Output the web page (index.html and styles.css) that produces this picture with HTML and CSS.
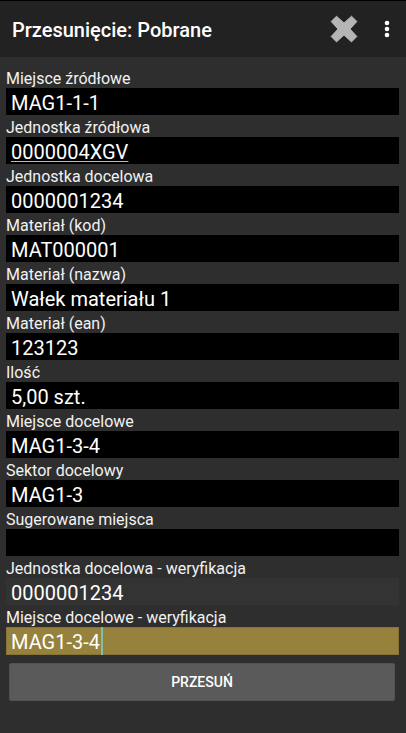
FILE: index.html
```html
<!DOCTYPE html>
<html lang="pl">
<head>
<meta charset="utf-8">
<meta name="viewport" content="width=device-width, initial-scale=1">
<title>Przesunięcie: Pobrane</title>
<link rel="stylesheet" href="styles.css">
</head>
<body>
<header class="bar">
  <h1 class="title">Przesunięcie: Pobrane</h1>
  <button class="icon-button close" type="button" aria-label="Zamknij">
    <svg width="28" height="28" viewBox="0 0 28 28"><path d="M6.500 1.200 14 8 21.500 1.200 26.900 6.500 20 14 26.900 21.500 21.500 26.900 14 20 6.500 26.900 1.200 21.500 8 14 1.200 6.500Z" fill="#b5b5b5" stroke="#b5b5b5" stroke-width="1" stroke-linejoin="round"/></svg>
  </button>
  <button class="icon-button more" type="button" aria-label="Więcej opcji">
    <svg width="6" height="18" viewBox="0 0 6 18"><g fill="#fff"><circle cx="3" cy="3" r="2.300"/><circle cx="3" cy="9" r="2.300"/><circle cx="3" cy="15" r="2.300"/></g></svg>
  </button>
</header>
<form class="form">
  <label class="label" for="src-place">Miejsce źródłowe</label>
  <input class="field" id="src-place" value="MAG1-1-1" readonly>
  <label class="label" for="src-unit">Jednostka źródłowa</label>
  <input class="field linked" id="src-unit" value="0000004XGV" readonly>
  <label class="label" for="dst-unit">Jednostka docelowa</label>
  <input class="field" id="dst-unit" value="0000001234" readonly>
  <label class="label" for="mat-code">Materiał (kod)</label>
  <input class="field" id="mat-code" value="MAT000001" readonly>
  <label class="label" for="mat-name">Materiał (nazwa)</label>
  <input class="field" id="mat-name" value="Wałek materiału 1" readonly>
  <label class="label" for="mat-ean">Materiał (ean)</label>
  <input class="field" id="mat-ean" value="123123" readonly>
  <label class="label" for="amount">Ilość</label>
  <input class="field" id="amount" value="5,00 szt." readonly>
  <label class="label" for="dst-place">Miejsce docelowe</label>
  <input class="field" id="dst-place" value="MAG1-3-4" readonly>
  <label class="label" for="dst-sector">Sektor docelowy</label>
  <input class="field" id="dst-sector" value="MAG1-3" readonly>
  <label class="label" for="suggested">Sugerowane miejsca</label>
  <input class="field" id="suggested" value="" readonly>
  <label class="label" for="unit-check">Jednostka docelowa - weryfikacja</label>
  <input class="field editable" id="unit-check" value="0000001234">
  <label class="label" for="place-check">Miejsce docelowe - weryfikacja</label>
  <div class="active-row">
    <input class="field active" id="place-check" value="MAG1-3-4">
    <span class="caret"></span>
  </div>
  <button class="submit" type="button">PRZESUŃ</button>
</form>
</body>
</html>
```
FILE: styles.css
```css
* {
  box-sizing: border-box;
}

body {
  display: flex;
  flex-direction: column;
  min-height: 100vh;
  margin: 0;
  background: #2e2e2e;
  color: #f2f2f2;
  font-family: Roboto, sans-serif;
}

.bar {
  display: flex;
  align-items: center;
  height: 57px;
  padding: 0 16px 0 12px;
  border-top: 1px solid #000;
  background: #222;
}

.title {
  flex: 1;
  margin: 0;
  padding-top: 2px;
  color: #fff;
  font-size: 20px;
  font-weight: 500;
  line-height: 24px;
}

.icon-button {
  display: flex;
  padding: 0;
  border: 0;
  background: none;
}

.close {
  margin-right: 26px;
}

.form {
  display: flex;
  flex-direction: column;
  padding: 9px 7px 0 6px;
}

.label {
  height: 22px;
  padding-top: 3px;
  font-size: 16px;
  line-height: 20px;
  white-space: nowrap;
}

.field {
  width: 100%;
  height: 27px;
  padding: 3px 5px 0;
  border: 0;
  outline: 0;
  background: #000;
  color: #fff;
  font-family: inherit;
  font-size: 20px;
}

.linked {
  text-decoration: underline 1px #bbb;
  text-underline-offset: 2px;
}

.editable {
  background: #333;
}

.active-row {
  position: relative;
  display: flex;
}

.active {
  height: 28px;
  border: 1px solid #857338;
  padding: 2px 4px 0;
  background: #97823d;
}

.caret {
  position: absolute;
  top: 0;
  bottom: 0;
  left: 95px;
  width: 2px;
  background: #80bfa8;
}

.submit {
  height: 38px;
  margin: 8px 4px 0 3px;
  padding: 0;
  border: 1px solid #525252;
  border-radius: 2px;
  background: #5a5a5a;
  color: #fff;
  font-family: inherit;
  font-size: 14px;
  font-weight: 500;
}
```
